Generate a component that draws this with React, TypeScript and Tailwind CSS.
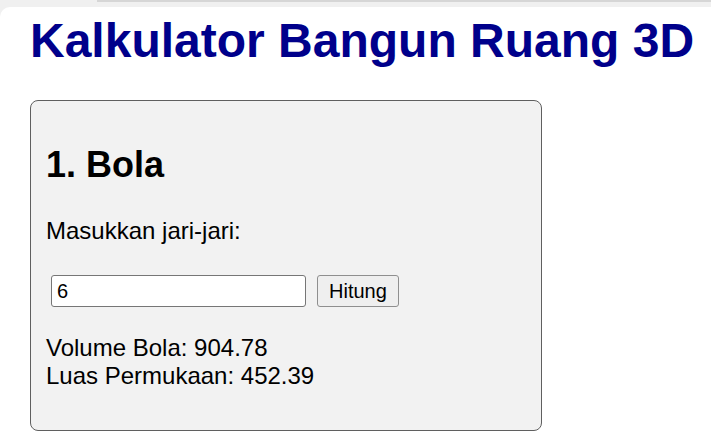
export default function App() {
	const jariJari = 6;
	const volume = ((4 / 3) * Math.PI * jariJari ** 3).toFixed(2);
	const luas = (4 * Math.PI * jariJari ** 2).toFixed(2);

	return (
		<div className="flex h-[438px] flex-col overflow-hidden bg-[#f0f0f0] font-['Liberation_Sans',Arial,sans-serif] text-black">
			{/* Browser strip */}
			<div className="flex h-[7px] shrink-0">
				<div className="w-[97px]" />
				<div className="flex-1 border-t-2 border-[#d6d6d6]" />
			</div>

			{/* Page */}
			<div className="flex-1 rounded-tl-[10px] bg-white">
				<h1 className="mt-[6px] pl-[30px] text-[48px] leading-[55px] font-bold text-[#00008b]">
					Kalkulator Bangun Ruang 3D
				</h1>

				<div className="mt-[32px] ml-[30px] w-[512px] rounded-[8px] border border-[#5f5f5f] bg-[#f2f2f2] px-[15px] pt-[15px] pb-[40px]">
					<h2 className="mt-[28px] text-[36px] leading-[41px] font-bold">1. Bola</h2>
					<p className="mt-[32px] text-[24px] leading-[28px]">Masukkan jari-jari:</p>
					<div className="mt-[30px] ml-[5px] flex items-center gap-[11px]">
						<input
							type="text"
							defaultValue="6"
							className="h-[32px] w-[255px] rounded-[3px] border border-[#767676] bg-white pl-[5px] text-[20px] text-black outline-none"
						/>
						<button
							type="button"
							className="h-[32px] rounded-[3px] border border-[#8f8f8f] bg-[#efefef] px-[11px] text-[20px] leading-none"
						>
							Hitung
						</button>
					</div>
					<div className="mt-[27px] text-[24px] leading-[28px]">
						<p>Volume Bola: {volume}</p>
						<p>Luas Permukaan: {luas}</p>
					</div>
				</div>
			</div>
		</div>
	);
}
